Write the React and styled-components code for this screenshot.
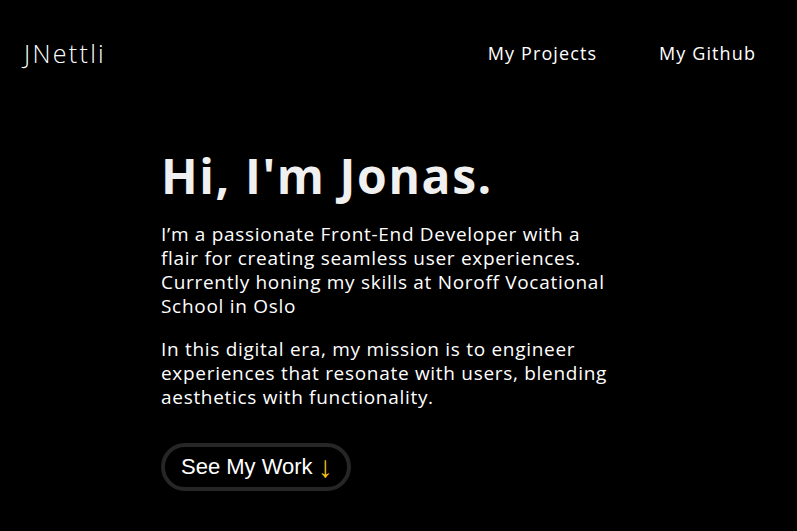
import styled, { createGlobalStyle } from "styled-components";

const Global = createGlobalStyle`
  html, body {
    margin: 0;
    padding: 0;
    background: #000;
  }
  body {
    font-family: "Open Sans", "Liberation Sans", sans-serif;
    color: #f2f2f2;
  }
`;

const Page = styled.div`
  min-height: 531px;
  background: #000;
`;

const Header = styled.header`
  display: flex;
  justify-content: space-between;
  align-items: center;
  height: 106px;
  padding: 0 24px;
  box-sizing: border-box;
`;

const Logo = styled.a`
  font-size: 25px;
  font-weight: 300;
  color: #fff;
  text-decoration: none;
  letter-spacing: 2.3px;
`;

const Nav = styled.nav`
  display: flex;
  gap: 62px;
  padding-right: 17px;

  a {
    color: #fff;
    font-size: 18px;
    font-weight: 400;
    letter-spacing: 1.1px;
    text-decoration: none;
  }
`;

const Hero = styled.main`
  width: 475px;
  margin: 44px auto 0;
`;

const Title = styled.h1`
  margin: 0 0 19px;
  font-size: 48px;
  font-weight: 700;
  letter-spacing: 1.6px;
  color: #f0f0f0;
  line-height: 1.1;
`;

const Text = styled.p`
  margin: 0 0 19px;
  max-width: 455px;
  font-size: 19px;
  line-height: 24px;
  letter-spacing: 0.7px;
  color: #fff;
`;

const Button = styled.a`
  display: inline-flex;
  align-items: center;
  gap: 5px;
  margin-top: 15px;
  height: 48px;
  box-sizing: border-box;
  padding: 0 14px 0 16px;
  border: 4px solid #262626;
  border-radius: 30px;
  font-family: "Liberation Sans", Arial, sans-serif;
  font-size: 22px;
  color: #fff;
  text-decoration: none;
`;

const Arrow = styled.span`
  color: #f7c21a;
  font-size: 30px;
  font-weight: 300;
  line-height: 1;
`;

export default function App() {
  return (
    <Page>
      <Global />
      <Header>
        <Logo href="#">JNettli</Logo>
        <Nav>
          <a href="#">My Projects</a>
          <a href="#">My Github</a>
        </Nav>
      </Header>
      <Hero>
        <Title>Hi, I'm Jonas.</Title>
        <Text>
          I’m a passionate Front-End Developer with a flair for creating seamless user
          experiences. Currently honing my skills at Noroff Vocational School in Oslo
        </Text>
        <Text>
          In this digital era, my mission is to engineer experiences that resonate with
          users, blending aesthetics with functionality.
        </Text>
        <Button href="#">
          See My Work <Arrow>↓</Arrow>
        </Button>
      </Hero>
    </Page>
  );
}
